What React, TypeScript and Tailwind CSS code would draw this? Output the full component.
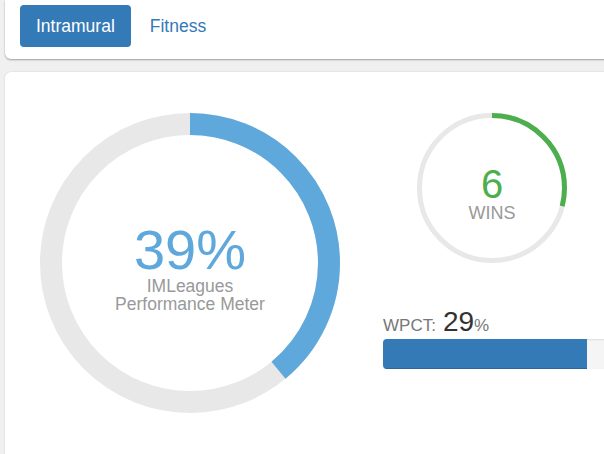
import React from 'react'

const font = { fontFamily: '"Liberation Sans", Arial, Helvetica, sans-serif' }

function Ring({
  size,
  stroke,
  percent,
  color,
  children,
}: {
  size: number
  stroke: number
  percent: number
  color: string
  children: React.ReactNode
}) {
  const r = (size - stroke) / 2
  const c = 2 * Math.PI * r
  return (
    <div className="relative shrink-0" style={{ width: size, height: size }}>
      <svg width={size} height={size} className="-rotate-90">
        <circle cx={size / 2} cy={size / 2} r={r} fill="none" stroke="#e8e8e8" strokeWidth={stroke} />
        <circle
          cx={size / 2}
          cy={size / 2}
          r={r}
          fill="none"
          stroke={color}
          strokeWidth={stroke}
          strokeDasharray={`${(c * percent) / 100} ${c}`}
        />
      </svg>
      <div className="absolute inset-0 flex flex-col items-center justify-center text-center">
        {children}
      </div>
    </div>
  )
}

export default function App() {
  return (
    <div className="h-[454px] w-[604px] overflow-hidden bg-[#f0f0f0]" style={font}>
      <div className="w-[660px] pl-[5px]">
        <div className="h-[59px] rounded-b-[6px] bg-white px-[15px] pt-[5px] shadow-[0_1px_2px_rgba(0,0,0,0.35)]">
          <div className="flex items-center gap-[3px]">
            <button className="h-[42px] rounded-[4px] bg-[#337ab7] px-[16px] text-[17.5px] text-white">
              Intramural
            </button>
            <button className="h-[42px] px-[16px] text-[17.5px] text-[#337ab7]">Fitness</button>
          </div>
        </div>

        <div className="mt-[13px] flex h-[420px] rounded-tl-[6px] bg-white pl-[35px] pt-[41px] shadow-[0_0_2px_rgba(0,0,0,0.15)]">
          <Ring size={300} stroke={22} percent={39} color="#5fa8dc">
            <div className="mt-[10px] text-[56px] leading-[54px] text-[#5fa8dc]">39%</div>
            <div className="text-[17.5px] leading-[18px] text-[#999]">IMLeagues</div>
            <div className="text-[17.5px] leading-[18px] text-[#999]">Performance Meter</div>
          </Ring>

          <div className="ml-[43px] flex flex-col">
            <div className="ml-[34px]">
              <Ring size={150} stroke={5} percent={29} color="#4cae4c">
                <div className="mt-[9px] text-[40px] leading-[40px] text-[#4cae4c]">6</div>
                <div className="text-[18px] leading-[18px] text-[#999]">WINS</div>
              </Ring>
            </div>
            <div className="mt-[44px] flex items-baseline text-[#777]">
              <span className="text-[17px]">WPCT:</span>
              <span className="ml-[7px] text-[28px] leading-[30px] text-[#333]">29</span>
              <span className="text-[17px]">%</span>
            </div>
            <div className="flex h-[30px] w-[300px] overflow-hidden rounded-[4px] bg-[#f5f5f5] shadow-[inset_0_1px_2px_rgba(0,0,0,0.1)]">
              <div className="h-full w-[204px] bg-[#337ab7] shadow-[inset_0_-1px_0_rgba(0,0,0,0.15)]" />
            </div>
          </div>
        </div>
      </div>
    </div>
  )
}
